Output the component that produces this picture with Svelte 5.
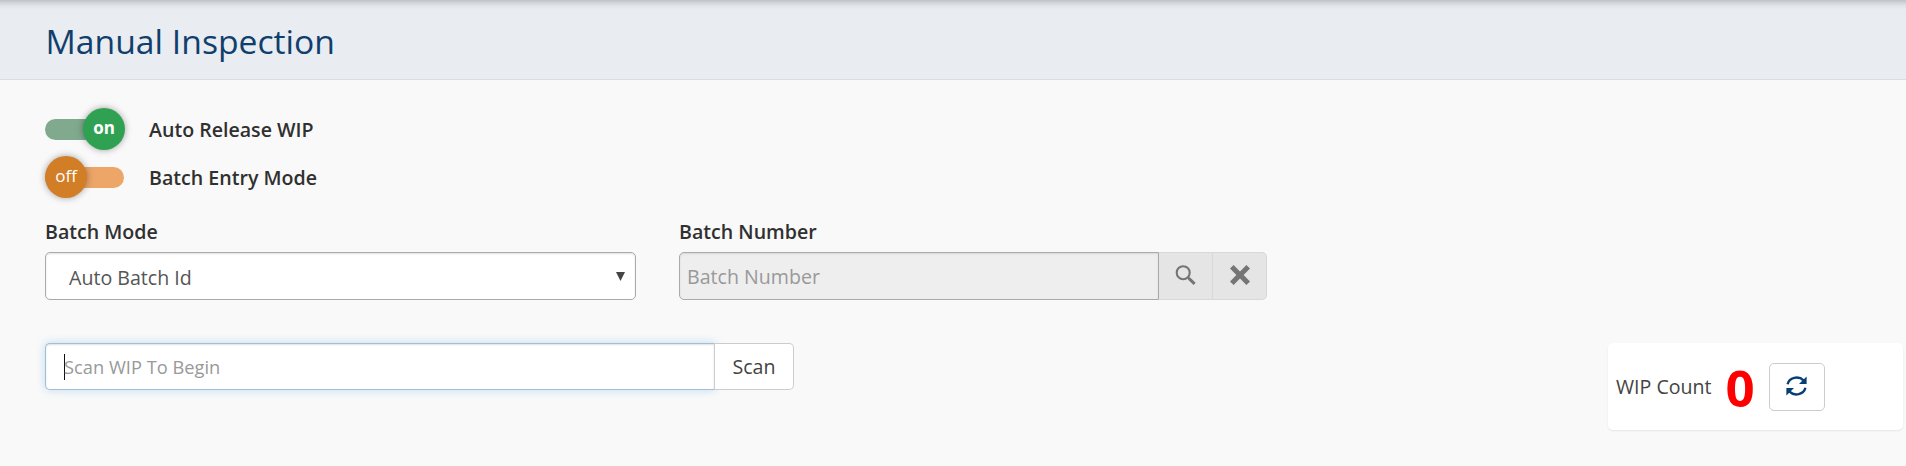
<script>
  const toggles = [
    { label: 'Auto Release WIP', on: true },
    { label: 'Batch Entry Mode', on: false }
  ];
</script>

<div class="page">
  <header><h1>Manual Inspection</h1></header>
  <main>
    <div class="toggles">
      {#each toggles as t}
        <div class="toggle-row">
          <span class="switch" class:on={t.on}>
            <span class="track"></span>
            <span class="knob">{t.on ? 'on' : 'off'}</span>
          </span>
          <span class="label">{t.label}</span>
        </div>
      {/each}
    </div>

    <div class="fields">
      <div class="field mode">
        <span class="label">Batch Mode</span>
        <div class="select">
          <span>Auto Batch Id</span>
          <svg width="9" height="9" viewBox="0 0 9 9"><path d="M0 0h9L4.5 9z" fill="#444" /></svg>
        </div>
      </div>
      <div class="field number">
        <span class="label">Batch Number</span>
        <div class="group">
          <div class="disabled">Batch Number</div>
          <div class="addon">
            <svg width="22" height="22" viewBox="0 0 22 22" fill="none" stroke="#757575">
              <circle cx="8.2" cy="8.7" r="6.5" stroke-width="2.1" />
              <path d="M12.9 13.4l1.4 1.4" stroke-width="2.2" />
              <path d="M13.9 14.4l5.7 5.4" stroke-width="3" />
            </svg>
          </div>
          <div class="addon last">
            <svg width="20" height="20" viewBox="0 0 20 20"><path d="M3.6 0L10 6.4 16.4 0 20 3.6 13.6 10 20 16.4 16.4 20 10 13.6 3.6 20 0 16.4 6.4 10 0 3.6z" fill="#757575" /></svg>
          </div>
        </div>
      </div>
    </div>

    <div class="bottom">
      <div class="scan">
        <div class="scan-input"><i class="caret"></i><span>Scan WIP To Begin</span></div>
        <div class="scan-btn">Scan</div>
      </div>
      <div class="card">
        <span class="count-label">WIP Count</span>
        <span class="count">0</span>
        <div class="refresh">
          <svg width="21" height="20" viewBox="0 0 21 20" fill="none" stroke="#063f78">
            <path d="M1.6 8.2A9.2 8.2 0 0 1 17.5 4.4" stroke-width="2.4" />
            <path d="M19.4 11.8A9.2 8.2 0 0 1 3.5 15.6" stroke-width="2.4" />
            <path d="M20.6 .6v7.4h-7.6z" fill="#063f78" stroke="none" />
            <path d="M.4 19.4V12H8z" fill="#063f78" stroke="none" />
          </svg>
        </div>
      </div>
    </div>
  </main>
</div>

<style>
  :global(body) { background: #f9f9f9; }
  .page {
    box-sizing: border-box;
    height: 466px;
    overflow: hidden;
    background: #f9f9f9;
    color: #303030;
    font-family: "Open Sans", sans-serif;
    font-size: 19.6px;
    line-height: 28px;
    white-space: nowrap;
  }
  .page * { box-sizing: border-box; }
  header {
    height: 80px;
    padding: 18px 0 0 45.5px;
    border-bottom: 1px solid #d9dde2;
    background: linear-gradient(#bfc2c7 0, #d2d5da 3px, #e2e5ea 6px, #e9ecf1 10px);
  }
  h1 {
    margin: 0;
    color: #103f6d;
    font-size: 33.7px;
    font-weight: 400;
    line-height: 46px;
  }
  main { padding: 25px 3px 0 45px; }
  .toggle-row { display: flex; height: 48px; align-items: center; }
  .switch { display: grid; width: 80px; margin-right: 24px; align-items: center; }
  .track, .knob { grid-area: 1 / 1; }
  .track { height: 21px; margin-right: 1px; border-radius: 11px; background: #eda568; }
  .on .track { background: #80a98e; }
  .knob {
    width: 42px;
    height: 42px;
    border-radius: 50%;
    background: #d17e27;
    color: #fff;
    box-shadow: 0 0 7px rgba(0, 0, 0, 0.35);
    font-size: 17px;
    line-height: 39px;
    text-align: center;
  }
  .on .knob { justify-self: end; background: #30a153; font-weight: 700; line-height: 40px; }
  .label { font-weight: 600; font-size: 19.6px; }
  .toggle-row .label { padding-top: 2px; }
  .fields { display: flex; gap: 43px; margin-top: 17px; }
  .field { display: flex; flex-direction: column; }
  .field .label { height: 34px; }
  .mode { width: 591px; }
  .number { width: 588px; }
  .select {
    display: flex;
    height: 48px;
    padding: 3px 10px 0 23px;
    align-items: center;
    justify-content: space-between;
    border: 1px solid #aaa;
    border-radius: 5px;
    background: #fff;
    box-shadow: inset 0 1px 2px rgba(0, 0, 0, 0.12);
    color: #555;
  }
  .select svg { margin-top: -3px; }
  .group { display: flex; height: 48px; }
  .disabled {
    width: 480px;
    padding: 10px 7px;
    border: 1px solid #aaa;
    border-radius: 5px 0 0 5px;
    background: #eee;
    color: #999;
    box-shadow: inset 0 1px 2px rgba(0, 0, 0, 0.1);
  }
  .addon {
    display: flex;
    width: 54px;
    align-items: center;
    justify-content: center;
    padding-bottom: 3px;
    border: 1px solid #d8d8d8;
    border-left: 0;
    background: #e5e5e5;
  }
  .last { border-radius: 0 5px 5px 0; }
  .bottom { display: flex; margin-top: 43px; justify-content: space-between; }
  .scan { display: flex; height: 47px; }
  .scan-input {
    display: flex;
    width: 670px;
    padding-left: 18px;
    align-items: center;
    border: 1px solid #a3bed5;
    border-right-color: #ccc;
    border-radius: 5px 0 0 5px;
    background: #fff;
    box-shadow: 0 0 10px rgba(102, 175, 233, 0.4), inset 0 1px 2px rgba(0, 0, 0, 0.12);
    color: #999;
    font-size: 18.3px;
  }
  .caret { width: 1px; height: 26px; margin-right: -1px; background: #111; }
  .scan-btn {
    position: relative;
    width: 79px;
    padding-top: 9px;
    border: 1px solid #ccc;
    border-left: 0;
    border-radius: 0 5px 5px 0;
    background: #fff;
    color: #444;
    text-align: center;
  }
  .card {
    display: flex;
    width: 295px;
    height: 87px;
    padding-left: 8px;
    align-items: center;
    border-radius: 5px;
    background: #fff;
    box-shadow: 0 1px 2px rgba(0, 0, 0, 0.08);
    color: #444;
  }
  .count { width: 29px; margin: 0 14px; color: #f00; font-size: 51px; font-weight: 700; line-height: 60px; }
  .refresh {
    display: flex;
    width: 56px;
    height: 48px;
    align-items: center;
    justify-content: center;
    padding-bottom: 2px;
    border: 1px solid #ccc;
    border-radius: 5px;
  }
</style>
